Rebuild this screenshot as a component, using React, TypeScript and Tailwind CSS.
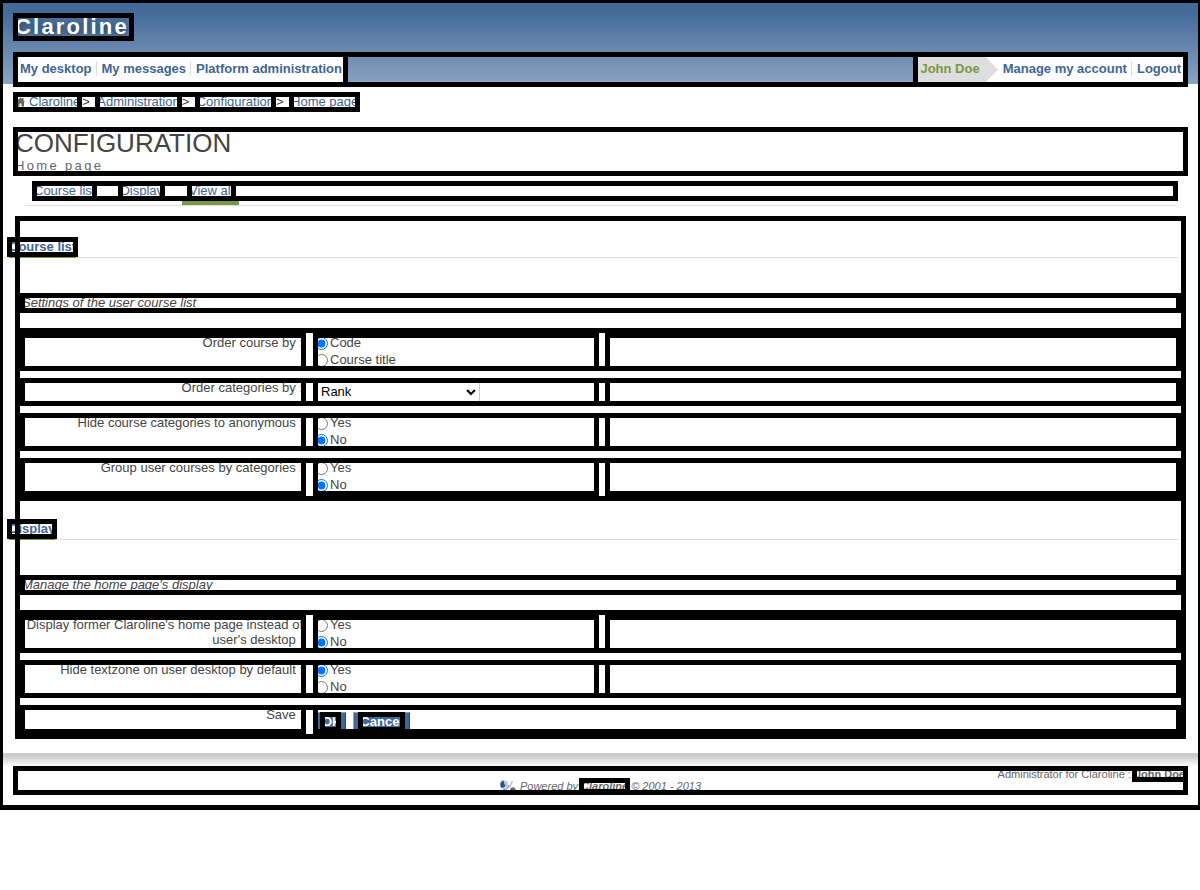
import React from "react";

const FRAME = "outline-[5px] -outline-offset-3 outline-solid outline-black";

type Option = { label: string; checked?: boolean };

function NavItem({ children, last }: { children: string; last?: boolean }) {
  return (
    <li
      className={
        last
          ? "mb-[2px] h-[15px] pl-[5px] leading-[15px]"
          : "mb-[2px] h-[15px] border-r border-[#dcdcdc] pr-[4px] pl-[5px] leading-[15px]"
      }
    >
      <a href="#">{children}</a>
    </li>
  );
}

function Arrow() {
  return (
    <svg width="15" height="31" viewBox="0 0 15 31" aria-hidden="true">
      <path d="M0 0 L15 15.5 L0 31 Z" fill="#dedede" />
    </svg>
  );
}

function HomeIcon() {
  return (
    <svg width="9" height="10" viewBox="0 0 9 10" className="mr-[4px] ml-[1px]" aria-hidden="true">
      <path d="M0 5 L4.5 0.5 L6 2 V1 H7.5 V3.5 L9 5 H8 V9.5 H5.5 V6.5 H3.5 V9.5 H1 V5 Z" fill="#6b625c" />
    </svg>
  );
}

function LogoIcon() {
  return (
    <svg width="16" height="12" viewBox="0 0 16 12" className="mr-[4px]" aria-hidden="true">
      <circle cx="4" cy="4.5" r="4" fill="#b9c9de" />
      <path d="M3.5 0.5 C0 1 -0.5 5.5 1.5 8 C3 8 5 7 5.5 5.5 C4 4.5 4 2 3.5 0.5 Z" fill="#2f5489" />
      <path d="M3 9.5 C6 10 8.5 8 9 5" stroke="#7d94b5" strokeWidth="1.4" fill="none" />
      <path d="M12.5 1 L9.5 7.5" stroke="#b7c1cf" strokeWidth="1.4" />
      <path d="M10 9 C11 7 14 6.5 15.5 8.5 V11 H11 Z" fill="#6c737d" />
    </svg>
  );
}

function Row({
  label,
  id,
  first,
  last,
  children,
}: {
  label: string;
  id: string;
  first?: boolean;
  last?: boolean;
  children: React.ReactNode;
}) {
  return (
    <div
      className={`grid grid-cols-[282fr_283fr_572fr] gap-x-[10px] ${FRAME} ${first ? "pt-[5px]" : ""} ${last ? "pb-[5px]" : ""}`}
    >
      <div className={`pr-[1px] text-right leading-[15px] ${FRAME}`}>
        <label id={id + "-label"} htmlFor={id}>
          {`${label} :`}
        </label>
      </div>
      <div className={`ml-[1px] ${FRAME}`}>{children}</div>
      <div className={FRAME} />
    </div>
  );
}

function Radios({ id, options }: { id: string; options: Option[] }) {
  return (
    <div role="radiogroup" aria-labelledby={id + "-label"}>
      {options.map((o, i) => (
        <label key={o.label} className="flex h-[17px] items-center gap-[2px]">
          <input
            type="radio"
            id={i === 0 ? id : id + "-" + i}
            name={id}
            defaultChecked={o.checked}
            className="m-0 size-[13px]"
          />
          <span className="self-start leading-[15px]">{o.label}</span>
        </label>
      ))}
    </div>
  );
}

function Section({ title, note, children }: { title: string; note: string; children: React.ReactNode }) {
  return (
    <section>
      <h2 className="mr-[6px] -ml-2 border-b border-[#dcdcdc] font-bold text-[#3e6595]">
        <span className="-mb-px block w-fit border-b-3 border-[#77993f]">
          <a href="#" className={`block leading-4 ${FRAME}`}>
            {title}
          </a>
        </span>
      </h2>
      <div className="mr-[5px] ml-[5px]">
        <p className={`mt-[37px] mb-[19px] leading-4 italic ${FRAME}`}>{note}</p>
        <div className="flex flex-col gap-[11px]">{children}</div>
      </div>
    </section>
  );
}

function ActionButton({ type, children }: { type: "submit" | "button"; children: string }) {
  return (
    <button
      type={type}
      className="flex h-5 items-start border border-t-[#86a3c6] border-r-[#24456f] border-b-[#24456f] border-l-[#86a3c6] bg-[#426896] px-[6px] pt-[1px] font-bold text-white"
    >
      <span className={`block leading-4 ${FRAME}`}>{children}</span>
    </button>
  );
}

const CRUMBS = ["Claroline", "Administration", "Configuration", "Home page"];

export default function App() {
  return (
    <div className="border-3 border-r-2 border-b-5 border-black bg-white font-['Liberation_Sans',Arial,sans-serif] text-[13px] text-[#444]">
      <header className="h-[81px] bg-linear-to-b from-[#446a99] from-10% to-[#8aa3c1] px-[12px] pt-[12px]">
        <h1
          className={`w-fit pr-[3px] text-[22px] leading-6 font-bold tracking-widest text-white [text-shadow:0_2px_6px_#1b2d45] ${FRAME}`}
        >
          <a href="#">Claroline</a>
        </h1>
        <nav className={`mt-[15px] flex h-[31px] justify-between font-bold text-[#3e6595] ${FRAME}`}>
          <ul className={`flex items-center bg-white pr-[4px] ${FRAME}`}>
            <NavItem>My desktop</NavItem>
            <NavItem>My messages</NavItem>
            <NavItem last>Platform administration</NavItem>
          </ul>
          <ul className={`flex items-center bg-white pr-[5px] ${FRAME}`}>
            <li className="flex h-full items-center">
              <span className="flex h-full items-center bg-[#dedede] pr-[3px] pb-[2px] pl-[5px] text-[#77993f]">
                John Doe
              </span>
              <Arrow />
            </li>
            <NavItem>Manage my account</NavItem>
            <NavItem last>Logout</NavItem>
          </ul>
        </nav>
      </header>

      <nav aria-label="Breadcrumb" className="px-[12px] pt-[10px]">
        <ol className={`flex h-4 w-fit leading-4 ${FRAME}`}>
          {CRUMBS.map((c, i) => (
            <li key={c} className="flex">
              {i > 0 && <span className="w-[17px] pl-[2px]">&gt;</span>}
              <a href="#" className={`flex items-center text-[#3e6595] ${FRAME}`}>
                {i === 0 && <HomeIcon />}
                {c}
              </a>
            </li>
          ))}
        </ol>
      </nav>

      <main>
        <div className={`mx-[12px] mt-[19px] h-[45px] ${FRAME}`}>
          <h2 className="text-[26px] leading-[28px]">CONFIGURATION</h2>
          <p className="leading-[17px] tracking-[0.18em] text-[#666]">Home page</p>
        </div>

        <div className="mx-[22px] mt-[9px] h-[23px] border-b border-[#dcdcdc] pl-[9px]">
          <ul className={`flex h-4 leading-4 text-[#3e6595] ${FRAME}`}>
            <li className="mr-[25px]">
              <a href="#" className={`block ${FRAME}`}>
                Course list
              </a>
            </li>
            <li className="mr-[19px]">
              <a href="#" className={`block ${FRAME}`}>
                Display
              </a>
            </li>
            <li className="h-[22px] border-b-4 border-[#77993f] pr-[5px] pl-[7px]">
              <a href="#" className={`block ${FRAME}`}>
                View all
              </a>
            </li>
          </ul>
        </div>

        <form
          onSubmit={(e) => e.preventDefault()}
          className={`mx-[14px] mt-[12px] flex flex-col gap-[22px] pt-[21px] ${FRAME}`}
        >
          <Section title="Course list" note="Settings of the user course list">
            <Row label="Order course by" id="order-course" first>
              <Radios id="order-course" options={[{ label: "Code", checked: true }, { label: "Course title" }]} />
            </Row>
            <Row label="Order categories by" id="order-categories">
              <select
                id="order-categories"
                className="block h-6 w-[165px] border border-[#ccc] bg-white pb-[2px] pl-[1px] text-[13px] text-black"
              >
                <option>Rank</option>
              </select>
            </Row>
            <Row label="Hide course categories to anonymous" id="hide-categories">
              <Radios id="hide-categories" options={[{ label: "Yes" }, { label: "No", checked: true }]} />
            </Row>
            <Row label="Group user courses by categories" id="group-courses" last>
              <Radios id="group-courses" options={[{ label: "Yes" }, { label: "No", checked: true }]} />
            </Row>
          </Section>

          <Section title="Display" note="Manage the home page's display">
            <Row label="Display former Claroline's home page instead of user's desktop" id="former-home" first>
              <Radios id="former-home" options={[{ label: "Yes" }, { label: "No", checked: true }]} />
            </Row>
            <Row label="Hide textzone on user desktop by default" id="hide-textzone">
              <Radios id="hide-textzone" options={[{ label: "Yes", checked: true }, { label: "No" }]} />
            </Row>
            <div className={`grid grid-cols-[282fr_865fr] gap-x-[10px] pb-[5px] ${FRAME}`}>
              <div className={`pr-[1px] text-right leading-[15px] ${FRAME}`}>Save :</div>
              <div className={`ml-[1px] flex gap-[7px] pt-[5px] ${FRAME}`}>
                <ActionButton type="submit">Ok</ActionButton>
                <ActionButton type="button">Cancel</ActionButton>
              </div>
            </div>
          </Section>
        </form>
      </main>

      <footer className="mt-4 pb-[12px] text-[11px] leading-3 text-[#666]">
        <div className="h-[15px] bg-linear-to-b from-[#cbcbcb] from-20% to-white to-90%" />
        <div className={`mx-[12px] h-[25px] ${FRAME}`}>
          <p className="flex justify-end gap-[3px]">
            Administrator for Claroline :
            <a href="#" className={`block px-[1px] font-bold ${FRAME}`}>
              John Doe
            </a>
          </p>
          <p className="flex items-center justify-center italic">
            <LogoIcon />
            Powered by
            <a href="#" className={`mx-[3px] block font-bold ${FRAME}`}>
              Claroline
            </a>
            © 2001 - 2013
          </p>
        </div>
      </footer>
    </div>
  );
}
